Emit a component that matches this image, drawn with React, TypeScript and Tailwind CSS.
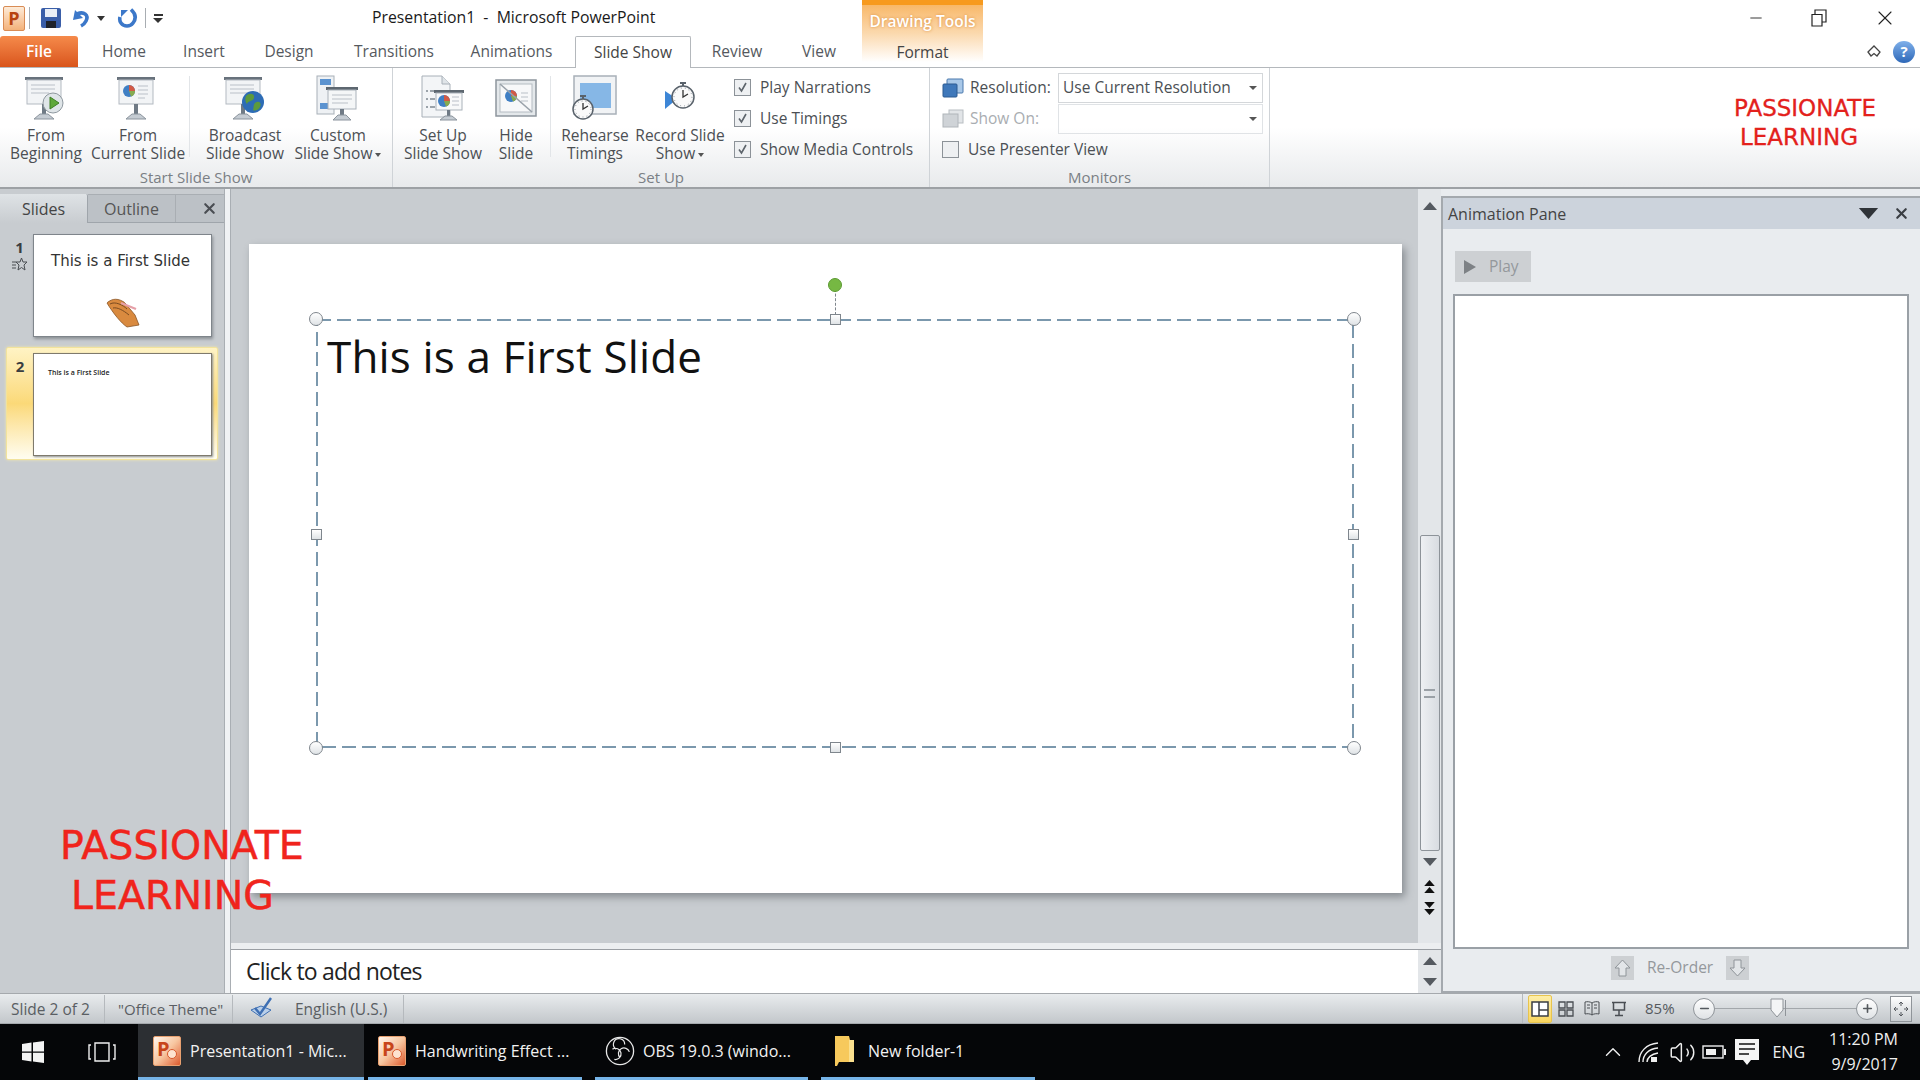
import type { ReactNode } from 'react'
import { ChevronUp, Volume2, X, Minus, Plus } from 'lucide-react'

const tabs = [
  { label: 'Home', w: 'w-[92px]' },
  { label: 'Insert', w: 'w-[68px]' },
  { label: 'Design', w: 'w-[102px]' },
  { label: 'Transitions', w: 'w-[108px]' },
  { label: 'Animations', w: 'w-[127px]' },
]

function Board({ children }: { children?: ReactNode }) {
  return (
    <svg width="50" height="48" viewBox="0 0 50 48">
      <rect x="4" y="2" width="38" height="3" fill="#68727c" />
      <rect x="6" y="5" width="34" height="24" fill="#f2f4f6" stroke="#b3bac1" />
      <rect x="21" y="29" width="4" height="11" fill="#6f7a85" />
      <path d="M13 44 L19 39 H27 L33 44 Z" fill="#c5ccd3" stroke="#8b949d" />
      {children}
    </svg>
  )
}

function Lines() {
  return <path d="M10 10 H34 M10 14 H34 M10 18 H28" stroke="#b9c0c7" strokeWidth="1.2" />
}

function Pie({ x, y }: { x: number; y: number }) {
  return (
    <g>
      <circle cx={x} cy={y} r="6" fill="#3f7fc4" />
      <path d={`M${x} ${y} V${y - 6} A6 6 0 0 1 ${x + 6} ${y} Z`} fill="#d35a45" />
      <path d={`M${x} ${y} H${x + 6} A6 6 0 0 1 ${x + 2} ${y + 5.6} Z`} fill="#87ab4f" />
    </g>
  )
}

function IconFromBeginning() {
  return (
    <Board>
      <Lines />
      <circle cx="32" cy="28" r="10" fill="#dfe5e8" stroke="#8f989f" />
      <path d="M29 22 L38 28 L29 34 Z" fill="#5fa83a" stroke="#3e7f25" />
    </Board>
  )
}

function IconFromCurrent() {
  return (
    <Board>
      <Pie x={16} y={16} />
      <path d="M25 11 H35 M25 15 H35 M25 19 H35 M25 23 H32" stroke="#b9c0c7" strokeWidth="1.2" />
    </Board>
  )
}

function IconBroadcast() {
  return (
    <Board>
      <Lines />
      <circle cx="33" cy="27" r="11" fill="#2d6cb5" />
      <path d="M26 21 C30 17 35 19 34 23 C33 27 28 25 27 29 C25 27 25 23 26 21 Z M35 28 C39 25 42 28 40 32 C38 36 34 36 33 35 C34 33 33 30 35 28 Z" fill="#5d9a3c" />
    </Board>
  )
}

function IconCustom() {
  return (
    <svg width="50" height="48" viewBox="0 0 50 48">
      <rect x="4" y="1" width="17" height="38" fill="#eef1f4" stroke="#a8b0b8" />
      <rect x="7" y="4" width="11" height="6" fill="#5b93d0" />
      <rect x="7" y="28" width="11" height="6" fill="#5b93d0" />
      <rect x="13" y="12" width="32" height="3" fill="#5d6770" />
      <rect x="15" y="15" width="28" height="19" fill="#f4f6f7" stroke="#aab2ba" />
      <path d="M19 20 H39 M19 24 H39 M19 28 H35" stroke="#b9c0c7" strokeWidth="1.2" />
      <rect x="27" y="34" width="4" height="7" fill="#6f7a85" />
      <path d="M20 45 L25 40 H33 L38 45 Z" fill="#c5ccd3" stroke="#8b949d" />
    </svg>
  )
}

function IconSetUp() {
  return (
    <svg width="50" height="48" viewBox="0 0 50 48">
      <path d="M4 1 H24 L32 9 V42 H4 Z" fill="#f3f5f7" stroke="#a8b0b8" />
      <path d="M24 1 V9 H32" fill="#dfe4e8" stroke="#a8b0b8" />
      <path d="M8 16 h2 M12 16 h5 M8 24 h2 M12 24 h5 M8 32 h2 M12 32 h5" stroke="#7f8891" strokeWidth="1.6" />
      <rect x="16" y="15" width="30" height="3" fill="#5d6770" />
      <rect x="18" y="18" width="26" height="17" fill="#f8f9fa" stroke="#aab2ba" />
      <Pie x={26} y={26} />
      <path d="M34 22 H41 M34 26 H41 M34 30 H41" stroke="#b9c0c7" strokeWidth="1.2" />
      <rect x="29" y="35" width="3" height="6" fill="#6f7a85" />
      <path d="M22 45 L27 41 H34 L39 45 Z" fill="#c5ccd3" stroke="#8b949d" />
    </svg>
  )
}

function IconHide() {
  return (
    <svg width="50" height="48" viewBox="0 0 50 48">
      <rect x="5" y="5" width="40" height="36" fill="#e4e8eb" stroke="#8d959d" strokeWidth="1.5" />
      <rect x="9" y="9" width="32" height="28" fill="#f7f8f9" stroke="#b4bbc2" />
      <Pie x={20} y={21} />
      <path d="M30 18 H37 M30 22 H37 M30 26 H37" stroke="#b9c0c7" strokeWidth="1.2" />
      <path d="M9 9 L41 37" stroke="#9aa2aa" strokeWidth="1.6" />
    </svg>
  )
}

function Clock({ cx, cy, r }: { cx: number; cy: number; r: number }) {
  return (
    <g>
      <path d={`M${cx - 3} ${cy - r - 3} H${cx + 3} M${cx} ${cy - r - 3} V${cy - r}`} stroke="#59626b" strokeWidth="2" />
      <circle cx={cx} cy={cy} r={r} fill="#fafafa" stroke="#59626b" strokeWidth="1.5" />
      <circle cx={cx} cy={cy} r={r - 2} fill="none" stroke="#8d959d" strokeDasharray="1 3" />
      <path d={`M${cx} ${cy - r + 4} V${cy} L${cx + 5} ${cy - 3}`} fill="none" stroke="#333" strokeWidth="1.3" />
    </g>
  )
}

function IconRehearse() {
  return (
    <svg width="50" height="48" viewBox="0 0 50 48">
      <rect x="4" y="1" width="42" height="38" fill="#f1f3f5" stroke="#a8b0b8" strokeWidth="1.5" />
      <rect x="10" y="8" width="31" height="25" fill="#86b7e6" />
      <Clock cx={13} cy={34} r={10} />
    </svg>
  )
}

function IconRecord() {
  return (
    <svg width="50" height="48" viewBox="0 0 50 48">
      <path d="M10 16 L22 24 L10 34 Z" fill="#3d86d6" />
      <Clock cx={28} cy={22} r={11} />
    </svg>
  )
}

function RibbonButton({ icon, lines, width, caret }: { icon: ReactNode; lines: string[]; width: string; caret?: boolean }) {
  return (
    <div className={`flex flex-col items-center ${width}`}>
      <div className="flex h-[58px] w-full items-start justify-center pt-[7px]">{icon}</div>
      {lines.map((line, i) => (
        <div key={line} className="h-[18px] whitespace-nowrap text-[15.5px] leading-[18px] text-[#4b4f54]">
          {line}
          {caret && i === 1 && <span className="ml-[3px] inline-block h-0 w-0 border-x-[3px] border-t-[4px] border-x-transparent border-t-[#555] align-middle" />}
        </div>
      ))}
    </div>
  )
}

function RibbonGroup({ label, width, children }: { label: string; width: string; children: ReactNode }) {
  return (
    <div className={`flex h-full flex-col border-r border-[#cfd3d7] ${width}`}>
      <div className="flex min-h-0 flex-1">{children}</div>
      <div className="h-[22px] text-center text-[15px] leading-[24px] text-[#7a7f85]">{label}</div>
    </div>
  )
}

function CheckRow({ label, checked = true }: { label: string; checked?: boolean }) {
  return (
    <div className="flex h-[31px] items-center">
      <div className="flex h-[17px] w-[17px] items-center justify-center border border-[#8c9298] bg-[#eef0f2]">
        {checked && (
          <svg width="13" height="13" viewBox="0 0 13 13">
            <path d="M3 6.5 L5.5 10 L10 2" fill="none" stroke="#5d646b" strokeWidth="1.6" />
          </svg>
        )}
      </div>
      <span className="ml-[9px] whitespace-nowrap text-[15.5px] text-[#4b4f54]">{label}</span>
    </div>
  )
}

function Caret({ dir, className }: { dir: 'up' | 'down'; className?: string }) {
  return (
    <svg width="14" height="8" viewBox="0 0 14 8" className={className}>
      <path d={dir === 'up' ? 'M0 8 L7 0 L14 8 Z' : 'M0 0 L14 0 L7 8 Z'} fill="currentColor" />
    </svg>
  )
}

function PptIcon() {
  return (
    <div className="relative flex h-[30px] w-[28px] items-start justify-start rounded-[2px] border border-[#e8a070] bg-gradient-to-br from-[#fff6ee] via-[#f7c6a0] to-[#d9582a] pl-[3px] pt-[2px]">
      <span className="text-[20px] font-bold leading-none text-[#c8451b]">P</span>
      <div className="absolute bottom-[6px] right-[3px] h-[10px] w-[10px] rounded-full border border-[#d9582a] bg-[#fde3cf]" />
    </div>
  )
}

function TaskItem({ icon, label, className, active }: { icon: ReactNode; label: string; className: string; active?: boolean }) {
  return (
    <div className={`flex h-full shrink-0 items-center border-b-[3px] border-[#76b4e8] ${className} ${active ? 'bg-[#2c2f33]' : ''}`}>
      <div className="flex w-[30px] justify-center">{icon}</div>
      <span className="ml-[8px] whitespace-nowrap text-[16px] text-[#f2f2f2]">{label}</span>
    </div>
  )
}

// selection handles of the title placeholder
const roundHandles = [
  'left-[-7px] top-[-7px]',
  'right-[-7px] top-[-7px]',
  'left-[-7px] bottom-[-7px]',
  'right-[-7px] bottom-[-7px]',
]
const squareHandles = [
  'left-1/2 top-[-5px] -ml-[5px]',
  'left-1/2 bottom-[-5px] -ml-[5px]',
  'left-[-5px] top-1/2 -mt-[5px]',
  'right-[-5px] top-1/2 -mt-[5px]',
]

export default function App() {
  return (
    <div className="relative flex h-[1080px] w-[1920px] flex-col overflow-hidden bg-white font-['Open_Sans',sans-serif]">
      {/* Title bar */}
      <div className="relative flex h-[36px] shrink-0 items-center">
        <div className="ml-[3px] flex h-[25px] w-[22px] items-center justify-center rounded-[2px] border border-[#d98c55] bg-gradient-to-b from-[#fdebd8] to-[#f3b27a]">
          <span className="text-[18px] font-bold leading-none text-[#b8430f]">P</span>
        </div>
        <div className="ml-[4px] h-[22px] w-px bg-[#a8adb2]" />
        <svg width="22" height="22" viewBox="0 0 22 22" className="ml-[10px]">
          <rect x="1" y="1" width="20" height="20" rx="2" fill="#3a5ea8" />
          <rect x="5" y="2" width="12" height="8" fill="#e9eef6" />
          <rect x="6" y="14" width="10" height="7" fill="#20232a" />
        </svg>
        <svg width="22" height="20" viewBox="0 0 22 20" className="ml-[8px]">
          <path d="M5 2 L3 12 L13 10 Z" fill="#3c78c9" />
          <path d="M7 6 C14 3 19 7 16 13 C15 15 13 17 11 18" fill="none" stroke="#3c78c9" strokeWidth="3.6" />
        </svg>
        <span className="ml-[5px] h-0 w-0 border-x-[4px] border-t-[5px] border-x-transparent border-t-[#333]" />
        <svg width="22" height="22" viewBox="0 0 22 22" className="ml-[11px]">
          <path d="M5 3 H12 L5 10 Z" fill="#3c78c9" />
          <path d="M15 2.5 C20 7 20 12 17 16 C14 20 8 20 5 16 C3.5 14 3.5 12 4 10" fill="none" stroke="#3c78c9" strokeWidth="3.6" />
        </svg>
        <div className="ml-[7px] h-[20px] w-px bg-[#a8adb2]" />
        <div className="ml-[7px] flex flex-col items-center gap-[2px]">
          <div className="h-[2px] w-[9px] bg-[#333]" />
          <span className="h-0 w-0 border-x-[5px] border-t-[5px] border-x-transparent border-t-[#333]" />
        </div>
        <span className="ml-[209px] whitespace-pre text-[15.8px] text-[#1a1a1a]">Presentation1  -  Microsoft PowerPoint</span>
        <div className="ml-auto flex items-center">
          <Minus size={18} strokeWidth={1.2} className="mr-[46px] text-[#222]" />
          <svg width="16" height="18" viewBox="0 0 16 18" className="mr-[46px]">
            <path d="M1 5.5 H11 V17 H1 Z M4 5 V1 H15 V13 H11" fill="none" stroke="#222" strokeWidth="1.2" />
          </svg>
          <X size={24} strokeWidth={1.1} className="mr-[23px] text-[#222]" />
        </div>
      </div>

      {/* Ribbon tabs */}
      <div className="flex h-[32px] shrink-0 items-stretch border-b border-[#b4b8bc]">
        <div className="flex w-[78px] items-center justify-center rounded-t-[3px] bg-gradient-to-b from-[#f58a4a] to-[#d9541a] text-[15.5px] font-semibold text-white">File</div>
        {tabs.map((tab) => (
          <div key={tab.label} className={`flex items-center justify-center text-[15.5px] text-[#55595e] ${tab.w}`}>
            {tab.label}
          </div>
        ))}
        <div className="-mb-px flex w-[116px] items-center justify-center rounded-t-[2px] border border-b-0 border-[#b4b8bc] bg-white text-[15.5px] text-[#444]">Slide Show</div>
        <div className="flex w-[92px] items-center justify-center text-[15.5px] text-[#55595e]">Review</div>
        <div className="flex w-[72px] items-center justify-center text-[15.5px] text-[#55595e]">View</div>
        <div className="ml-auto flex items-center">
          <svg width="14" height="14" viewBox="0 0 14 14" className="mr-[12px]">
            <path d="M1 7 L7 1 L13 7 L10 11 L7 8.5 L4 11 Z" fill="none" stroke="#444" strokeWidth="1.3" />
          </svg>
          <div className="mr-[5px] flex h-[22px] w-[22px] items-center justify-center rounded-full bg-gradient-to-b from-[#7fb0ea] to-[#2e68b8] text-[15px] font-bold text-white">?</div>
        </div>
      </div>

      {/* Drawing Tools contextual tab, spans the title bar and the tab strip */}
      <div className="absolute left-[862px] top-0 flex h-[62px] w-[121px] flex-col items-center border-t-[5px] border-[#f79a1e] bg-gradient-to-b from-[#f8b868] via-[#fbd9ae] to-white">
        <span className="mt-[5px] h-[22px] text-[15.5px] font-semibold leading-[22px] text-white [text-shadow:0_0_3px_#d98a3a]">Drawing Tools</span>
        <span className="mt-[9px] h-[22px] text-[15.5px] leading-[22px] text-[#444]">Format</span>
      </div>

      {/* Ribbon */}
      <div className="flex h-[121px] shrink-0 border-b-2 border-[#9da1a5] bg-gradient-to-b from-white via-white to-[#e8eaec]">
        <RibbonGroup label="Start Slide Show" width="w-[393px]">
          <RibbonButton icon={<IconFromBeginning />} lines={['From', 'Beginning']} width="w-[92px]" />
          <RibbonButton icon={<IconFromCurrent />} lines={['From', 'Current Slide']} width="w-[92px]" />
          <div className="ml-[5px] mr-[7px] my-[8px] w-px bg-[#e2e5e8]" />
          <RibbonButton icon={<IconBroadcast />} lines={['Broadcast', 'Slide Show']} width="w-[96px]" />
          <RibbonButton icon={<IconCustom />} lines={['Custom', 'Slide Show']} width="w-[90px]" caret />
        </RibbonGroup>
        <RibbonGroup label="Set Up" width="w-[537px]">
          <div className="w-[7px]" />
          <RibbonButton icon={<IconSetUp />} lines={['Set Up', 'Slide Show']} width="w-[86px]" />
          <RibbonButton icon={<IconHide />} lines={['Hide', 'Slide']} width="w-[60px]" />
          <div className="mx-[4px] my-[8px] w-px bg-[#e2e5e8]" />
          <RibbonButton icon={<IconRehearse />} lines={['Rehearse', 'Timings']} width="w-[80px]" />
          <RibbonButton icon={<IconRecord />} lines={['Record Slide', 'Show']} width="w-[90px]" caret />
          <div className="ml-[9px] flex flex-col pt-[4px]">
            <CheckRow label="Play Narrations" />
            <CheckRow label="Use Timings" />
            <CheckRow label="Show Media Controls" />
          </div>
        </RibbonGroup>
        <RibbonGroup label="Monitors" width="w-[340px]">
          <div className="flex flex-col pl-[12px] pt-[4px]">
            <div className="flex h-[31px] items-center">
              <svg width="22" height="20" viewBox="0 0 22 20">
                <rect x="5" y="1" width="16" height="14" rx="1" fill="#a9c8e8" stroke="#4b79ad" />
                <rect x="1" y="6" width="14" height="13" rx="1" fill="#3f78ba" stroke="#2d5a91" />
              </svg>
              <span className="ml-[6px] w-[88px] text-[15.5px] text-[#4b4f54]">Resolution:</span>
              <div className="flex h-[30px] w-[205px] items-center justify-between border border-[#d4d7da] bg-white pl-[4px] pr-[5px] text-[15.5px] text-[#4b4f54]">
                Use Current Resolution
                <span className="h-0 w-0 border-x-[4px] border-t-[4px] border-x-transparent border-t-[#555]" />
              </div>
            </div>
            <div className="flex h-[31px] items-center">
              <svg width="22" height="20" viewBox="0 0 22 20">
                <rect x="7" y="1" width="14" height="13" fill="#e2e5e8" stroke="#b8bdc2" />
                <rect x="1" y="5" width="15" height="13" fill="#cfd3d7" stroke="#b0b5ba" />
              </svg>
              <span className="ml-[6px] w-[88px] text-[15.5px] text-[#a9adb1]">Show On:</span>
              <div className="flex h-[30px] w-[205px] items-center justify-end border border-[#e0e3e6] pr-[5px]">
                <span className="h-0 w-0 border-x-[4px] border-t-[4px] border-x-transparent border-t-[#555]" />
              </div>
            </div>
            <CheckRow label="Use Presenter View" checked={false} />
          </div>
        </RibbonGroup>
        <div className="flex flex-1 flex-col items-start pl-[464px] pt-[26px] font-['DejaVu_Sans',sans-serif] text-[23px] leading-[29px] text-[#e3211c] [-webkit-text-stroke:0.3px_#e3211c]">
          <span>PASSIONATE</span>
          <span className="ml-[6px]">LEARNING</span>
        </div>
      </div>

      {/* Editor */}
      <div className="flex min-h-0 flex-1 bg-[#c8ccd0]">
        {/* Slide sorter */}
        <div className="flex w-[224px] shrink-0 flex-col pt-[5px]">
          <div className="flex h-[29px] border-b border-[#9fa5ab]">
            <div className="-mb-px flex w-[88px] items-center justify-center rounded-tr-[2px] border-r border-[#9fa5ab] bg-gradient-to-b from-[#dfe3e6] to-[#c8ccd0] text-[16px] text-[#444]">Slides</div>
            <div className="flex w-[88px] items-center justify-center border-r border-t border-[#a9aeb3] bg-[#bcc1c6] text-[16px] text-[#555]">Outline</div>
            <div className="flex flex-1 items-center justify-end border-t border-[#a9aeb3] bg-[#bcc1c6] pr-[6px]">
              <X size={17} strokeWidth={3} className="text-[#4a4e53]" />
            </div>
          </div>
          <div className="ml-[6px] mt-[5px] flex h-[113px] w-[212px] pb-[5px] pt-[6px]">
            <div className="flex w-[27px] flex-col items-center pt-[3px]">
              <span className="text-[15px] font-bold leading-[20px] text-[#3a3d40]">1</span>
              <svg width="16" height="14" viewBox="0 0 16 14">
                <path d="M9.5 1 L11 5 H15 L12 8 L13 13 L9.5 10.5 L6 13 L7 8 L4 5 H8 Z" fill="none" stroke="#4a4e53" />
                <path d="M0 5 H4 M0 8 H4 M0 11 H4" stroke="#4a4e53" />
              </svg>
            </div>
            <div className="relative h-[103px] w-[179px] border border-[#7f858b] bg-white shadow-[1px_2px_3px_#8a8f94]">
              <div className="mt-[16px] whitespace-pre pl-[17px] font-['DejaVu_Sans',sans-serif] text-[15px] leading-[20px] text-[#333]">This is a First Slide</div>
              <svg width="36" height="32" viewBox="0 0 36 32" className="absolute left-[71px] top-[62px]">
                <path d="M2 6 C7 1 14 1 20 6 L30 18 L34 28 L22 30 C16 26 8 16 2 6 Z" fill="#d98a3f" stroke="#8a5526" strokeWidth="0.8" />
                <path d="M5 7 C10 4 18 8 22 12 M8 11 C12 10 18 13 24 18" fill="none" stroke="#7a4a20" strokeWidth="1" />
                <path d="M16 6 L31 12" stroke="#e6a0a8" strokeWidth="2.2" />
              </svg>
            </div>
          </div>
          <div className="ml-[6px] mt-[6px] flex h-[113px] w-[212px] rounded-[2px] border border-[#f2e39c] bg-gradient-to-b from-[#fff3c4] via-[#fbd978] to-[#fffdf0] py-[5px] pr-[5px] shadow-[0_0_3px_#f4e7ae]">
            <div className="flex w-[26px] justify-center pt-[3px]">
              <span className="text-[15px] font-bold leading-[20px] text-[#3a3d40]">2</span>
            </div>
            <div className="h-[103px] w-[179px] border border-[#7f7a6c] bg-white pl-[14px] pt-[14px] shadow-[1px_1px_2px_#8a8f94]">
              <div className="whitespace-pre text-[7px] font-semibold leading-[10px] text-[#222]">This is a First Slide</div>
            </div>
          </div>
        </div>

        {/* Splitter */}
        <div className="w-[7px] shrink-0 border-x border-[#a9aeb3] bg-[#f0f2f4]" />

        {/* Canvas and notes */}
        <div className="flex w-[1210px] shrink-0 flex-col">
          <div className="flex min-h-0 flex-1">
            <div className="w-[1187px] shrink-0 pl-[18px] pt-[55px]">
              <div className="relative h-[649px] w-[1153px] bg-white shadow-[3px_4px_8px_#868b90]">
                {/* Title placeholder with selection frame */}
                <div className="absolute left-[67px] top-[75px] h-[429px] w-[1038px]">
                  <svg width="1038" height="429" viewBox="0 0 1038 429" className="absolute inset-0">
                    <rect x="1" y="1" width="1036" height="427" fill="none" stroke="#7b98ad" strokeWidth="2" strokeDasharray="14 6" />
                  </svg>
                  <div className="pl-[11px] pt-[7px] text-[44px] leading-[60px] tracking-[0.15px] text-[#111]">This is a First Slide</div>
                  {roundHandles.map((pos) => (
                    <div key={pos} className={`absolute h-[14px] w-[14px] rounded-full border border-[#7f868d] bg-gradient-to-b from-white to-[#dfe3e6] ${pos}`} />
                  ))}
                  {squareHandles.map((pos) => (
                    <div key={pos} className={`absolute h-[11px] w-[11px] border border-[#7f868d] bg-gradient-to-b from-white to-[#dfe3e6] ${pos}`} />
                  ))}
                  <div className="absolute left-1/2 top-[-30px] h-[26px] border-l border-dashed border-[#7f868d]" />
                  <div className="absolute left-1/2 top-[-41px] -ml-[7px] h-[14px] w-[14px] rounded-full border border-[#5c9a32] bg-[#76b843]" />
                </div>
              </div>
            </div>
            {/* Vertical scrollbar */}
            <div className="flex w-[23px] shrink-0 flex-col items-center bg-[#e3e6e9] pt-[13px] text-[#555a60]">
              <Caret dir="up" />
              <div className="h-[325px] w-full shrink-0" />
              <div className="flex h-[316px] w-[20px] shrink-0 items-center justify-center rounded-[2px] border border-[#8d9399] bg-gradient-to-r from-[#eef0f3] to-[#d8dce1]">
                <div className="h-[9px] w-[11px] border-y-2 border-[#9aa0a6]" />
              </div>
              <Caret dir="down" className="mt-[7px]" />
              <div className="mt-[14px] flex flex-col items-center gap-[1px] text-[#111]">
                <Caret dir="up" className="h-[6px] w-[11px]" />
                <Caret dir="up" className="h-[6px] w-[11px]" />
              </div>
              <div className="mt-[9px] flex flex-col items-center gap-[1px] text-[#111]">
                <Caret dir="down" className="h-[6px] w-[11px]" />
                <Caret dir="down" className="h-[6px] w-[11px]" />
              </div>
            </div>
          </div>
          <div className="h-[7px] shrink-0 border-b border-[#9a9ea3] bg-[#eceef0]" />
          <div className="flex h-[43px] shrink-0">
            <div className="flex w-[1187px] items-center bg-white pl-[15px] text-[23px] tracking-[-0.8px] text-[#222]">Click to add notes</div>
            <div className="flex w-[23px] flex-col items-center justify-center gap-[13px] bg-[#e3e6e9] text-[#555a60]">
              <Caret dir="up" />
              <Caret dir="down" />
            </div>
          </div>
        </div>

        {/* Animation pane */}
        <div className="flex flex-1 flex-col bg-[#e9ecef] pt-[7px]">
          <div className="flex flex-1 flex-col border-b-2 border-l-2 border-t-2 border-[#a4a9ae]">
            <div className="flex h-[31px] shrink-0 items-center bg-[#ccd3dc] pl-[5px] text-[16px] text-[#444]">
              Animation Pane
              <Caret dir="down" className="ml-auto h-[11px] w-[21px] text-[#2f3338]" />
              <X size={17} strokeWidth={3} className="ml-[14px] mr-[10px] text-[#3a3e43]" />
            </div>
            <div className="ml-[12px] mt-[22px] flex h-[31px] w-[76px] items-center bg-[#cdd0d3] pl-[8px] text-[15.5px] text-[#94989c]">
              <svg width="14" height="16" viewBox="0 0 14 16">
                <path d="M1 1 L13 8 L1 15 Z" fill="#7d8185" />
              </svg>
              <span className="ml-[12px]">Play</span>
            </div>
            <div className="ml-[10px] mr-[11px] mt-[12px] h-[655px] border-2 border-[#9aa0a6] bg-white" />
            <div className="mt-[5px] flex h-[28px] items-center pl-[168px] text-[15.5px] text-[#94989c]">
              <div className="flex h-[24px] w-[23px] items-center justify-center bg-[#cdd0d3]">
                <svg width="17" height="18" viewBox="0 0 17 18">
                  <path d="M8.5 1 L16 9 H12 V17 H5 V9 H1 Z" fill="#e2e5e8" stroke="#8f9499" />
                </svg>
              </div>
              <span className="ml-[13px] w-[79px]">Re-Order</span>
              <div className="flex h-[24px] w-[23px] items-center justify-center bg-[#cdd0d3]">
                <svg width="17" height="18" viewBox="0 0 17 18">
                  <path d="M8.5 17 L16 9 H12 V1 H5 V9 H1 Z" fill="#e2e5e8" stroke="#8f9499" />
                </svg>
              </div>
            </div>
          </div>
        </div>
      </div>

      {/* Status bar */}
      <div className="flex h-[31px] shrink-0 items-center border-y border-[#a5a9ad] bg-gradient-to-b from-[#e9ecee] to-[#c3c7cb] text-[15.5px] text-[#5a5e63]">
        <span className="w-[105px] whitespace-nowrap border-r border-[#b5b9bd] pl-[11px] leading-[28px]">Slide 2 of 2</span>
        <span className="w-[128px] whitespace-nowrap border-r border-[#b5b9bd] pl-[13px] text-[15px] leading-[28px]">"Office Theme"</span>
        <svg width="26" height="26" viewBox="0 0 26 26" className="ml-[15px]">
          <path d="M3 14 L13 10 L23 14 L13 21 Z" fill="#b9cfe9" stroke="#3e6fb3" />
          <path d="M7 12 L12 18 L23 2" fill="none" stroke="#3e6fb3" strokeWidth="2.4" />
        </svg>
        <span className="ml-[21px] w-[109px] whitespace-nowrap border-r border-[#b5b9bd] leading-[28px]">English (U.S.)</span>
        <div className="ml-auto flex h-full items-center border-l border-[#b5b9bd] pl-[5px]">
          <div className="flex h-[28px] w-[24px] items-center justify-center rounded-[2px] border border-[#e8c44e] bg-gradient-to-b from-[#fdeea8] to-[#f9d65e]">
            <svg width="18" height="16" viewBox="0 0 18 16">
              <rect x="1" y="1" width="16" height="14" fill="#fff" stroke="#3a3e43" strokeWidth="1.5" />
              <path d="M8 1 V15 M8 9 H17" stroke="#3a3e43" strokeWidth="1.5" />
            </svg>
          </div>
          <svg width="16" height="16" viewBox="0 0 16 16" className="ml-[6px]">
            <path d="M1 1 H7 V7 H1 Z M9 1 H15 V7 H9 Z M1 9 H7 V15 H1 Z M9 9 H15 V15 H9 Z" fill="none" stroke="#4a4e53" strokeWidth="1.3" />
          </svg>
          <svg width="16" height="18" viewBox="0 0 16 18" className="ml-[10px]">
            <path d="M8 3 C6 1.5 3 1.5 1 2 V14 C3 13.5 6 13.5 8 15 C10 13.5 13 13.5 15 14 V2 C13 1.5 10 1.5 8 3 Z M8 3 V15 M3 5 H6 M3 8 H6 M10 5 H13 M10 8 H13" fill="none" stroke="#4a4e53" />
          </svg>
          <svg width="16" height="16" viewBox="0 0 16 16" className="ml-[11px]">
            <path d="M1 1.5 H15 M2.5 2 V9 H13.5 V2 M8 9 V14 M4 14.5 H12" fill="none" stroke="#4a4e53" strokeWidth="1.5" />
          </svg>
          <span className="ml-[18px] w-[38px] text-[15px] text-[#55595e]">85%</span>
          <div className="ml-[10px] flex h-[22px] w-[22px] items-center justify-center rounded-full border border-[#8f9499] bg-gradient-to-b from-white to-[#dfe2e5]">
            <Minus size={13} strokeWidth={3} className="text-[#55595e]" />
          </div>
          <div className="relative h-px w-[141px] bg-[#a3a7ab]">
            <div className="absolute left-[70px] top-[-8px] h-[16px] w-px bg-[#8f9499]" />
            <svg width="14" height="20" viewBox="0 0 14 20" className="absolute left-[55px] top-[-10px]">
              <path d="M1 1 H13 V12 L7 19 L1 12 Z" fill="#f4f5f6" stroke="#8f9499" />
            </svg>
          </div>
          <div className="flex h-[22px] w-[22px] items-center justify-center rounded-full border border-[#8f9499] bg-gradient-to-b from-white to-[#dfe2e5]">
            <Plus size={13} strokeWidth={3} className="text-[#55595e]" />
          </div>
          <div className="ml-[12px] mr-[8px] flex h-[26px] w-[22px] items-center justify-center border border-[#8f9499] bg-gradient-to-b from-white to-[#c9cdd1]">
            <svg width="16" height="16" viewBox="0 0 16 16">
              <path d="M8 1 V5 M8 11 V15 M1 8 H5 M11 8 H15 M6 3 L8 1 L10 3 M6 13 L8 15 L10 13 M3 6 L1 8 L3 10 M13 6 L15 8 L13 10" fill="none" stroke="#55595e" />
            </svg>
          </div>
        </div>
      </div>

      {/* Taskbar */}
      <div className="flex h-[56px] shrink-0 items-center bg-[#050608]">
        <svg width="24" height="24" viewBox="0 0 24 24" className="ml-[21px]">
          <path d="M1 4 L10.5 2.6 V11.4 H1 Z M12 2.4 L23 1 V11.4 H12 Z M1 12.8 H10.5 V21.4 L1 20 Z M12 12.8 H23 V23 L12 21.6 Z" fill="#f4f4f4" />
        </svg>
        <svg width="28" height="26" viewBox="0 0 28 26" className="ml-[43px]">
          <path d="M7 4 H21 V22 H7 Z M3 6 H1 V20 H3 M25 6 H27 V20 H25" fill="none" stroke="#f0f0f0" strokeWidth="1.4" />
        </svg>
        <div className="ml-[22px] flex h-full items-stretch">
          <TaskItem active icon={<PptIcon />} label="Presentation1 - Mic..." className="w-[226px] pl-[14px]" />
          <div className="w-[4px]" />
          <TaskItem icon={<PptIcon />} label="Handwriting Effect ..." className="w-[214px] pl-[9px]" />
          <div className="w-[13px]" />
          <TaskItem
            icon={
              <svg width="32" height="32" viewBox="0 0 32 32">
                <circle cx="16" cy="16" r="14.5" fill="none" stroke="#e8e8e8" strokeWidth="1.4" />
                <path d="M21 9 A6 6 0 1 0 12 14 M10 25 A6 6 0 1 0 8 14 M26 17 A6 6 0 1 0 16 23" fill="none" stroke="#e8e8e8" strokeWidth="1.3" />
              </svg>
            }
            label="OBS 19.0.3 (windo..."
            className="w-[213px] pl-[10px]"
          />
          <div className="w-[13px]" />
          <TaskItem
            icon={
              <svg width="20" height="32" viewBox="0 0 20 32">
                <path d="M0 1 H14 L15 5 V24 H18 V27 H4 L2 31 H0 Z" fill="#f7c95c" />
                <path d="M14 5 H19 V27 H14 Z" fill="#fbe08e" />
              </svg>
            }
            label="New folder-1"
            className="w-[214px] pl-[9px]"
          />
        </div>
        <div className="ml-auto flex items-center text-[#efefef]">
          <ChevronUp size={26} strokeWidth={1.3} className="mr-[10px]" />
          <svg width="24" height="24" viewBox="0 0 24 24" className="mr-[9px]">
            <path d="M3 22 C3 12 10 4 22 3 M7 22 C7 15 12 9 22 8 M11 22 C11 18 15 14 22 13" fill="none" stroke="#efefef" strokeWidth="1.4" />
            <rect x="15" y="17" width="6" height="5" fill="#efefef" />
          </svg>
          <Volume2 size={27} strokeWidth={1.3} className="mr-[6px]" />
          <svg width="24" height="14" viewBox="0 0 24 14" className="mr-[8px]">
            <rect x="1" y="1" width="20" height="12" fill="none" stroke="#efefef" strokeWidth="1.4" />
            <rect x="4" y="4" width="10" height="6" fill="#efefef" />
            <rect x="22" y="4" width="2" height="6" fill="#efefef" />
          </svg>
          <svg width="26" height="28" viewBox="0 0 26 28" className="mr-[12px]">
            <path d="M1 1 H25 V22 H17 L13 27 L9 22 H1 Z" fill="#f5f5f5" />
            <path d="M5 6 H21 M5 11 H21 M5 16 H15" stroke="#111" strokeWidth="1.6" />
          </svg>
          <span className="mr-[24px] text-[16px]">ENG</span>
          <div className="mr-[22px] flex flex-col items-end text-[16px] leading-[25px]">
            <span>11:20 PM</span>
            <span>9/9/2017</span>
          </div>
        </div>
      </div>

      {/* Watermark burned into the recording */}
      <div className="absolute left-[60px] top-[820px] flex flex-col font-['DejaVu_Sans',sans-serif] text-[39.5px] leading-[50px] text-[#f0241c] [-webkit-text-stroke:0.5px_#f0241c]">
        <span>PASSIONATE</span>
        <span className="ml-[11px]">LEARNING</span>
      </div>
    </div>
  )
}
